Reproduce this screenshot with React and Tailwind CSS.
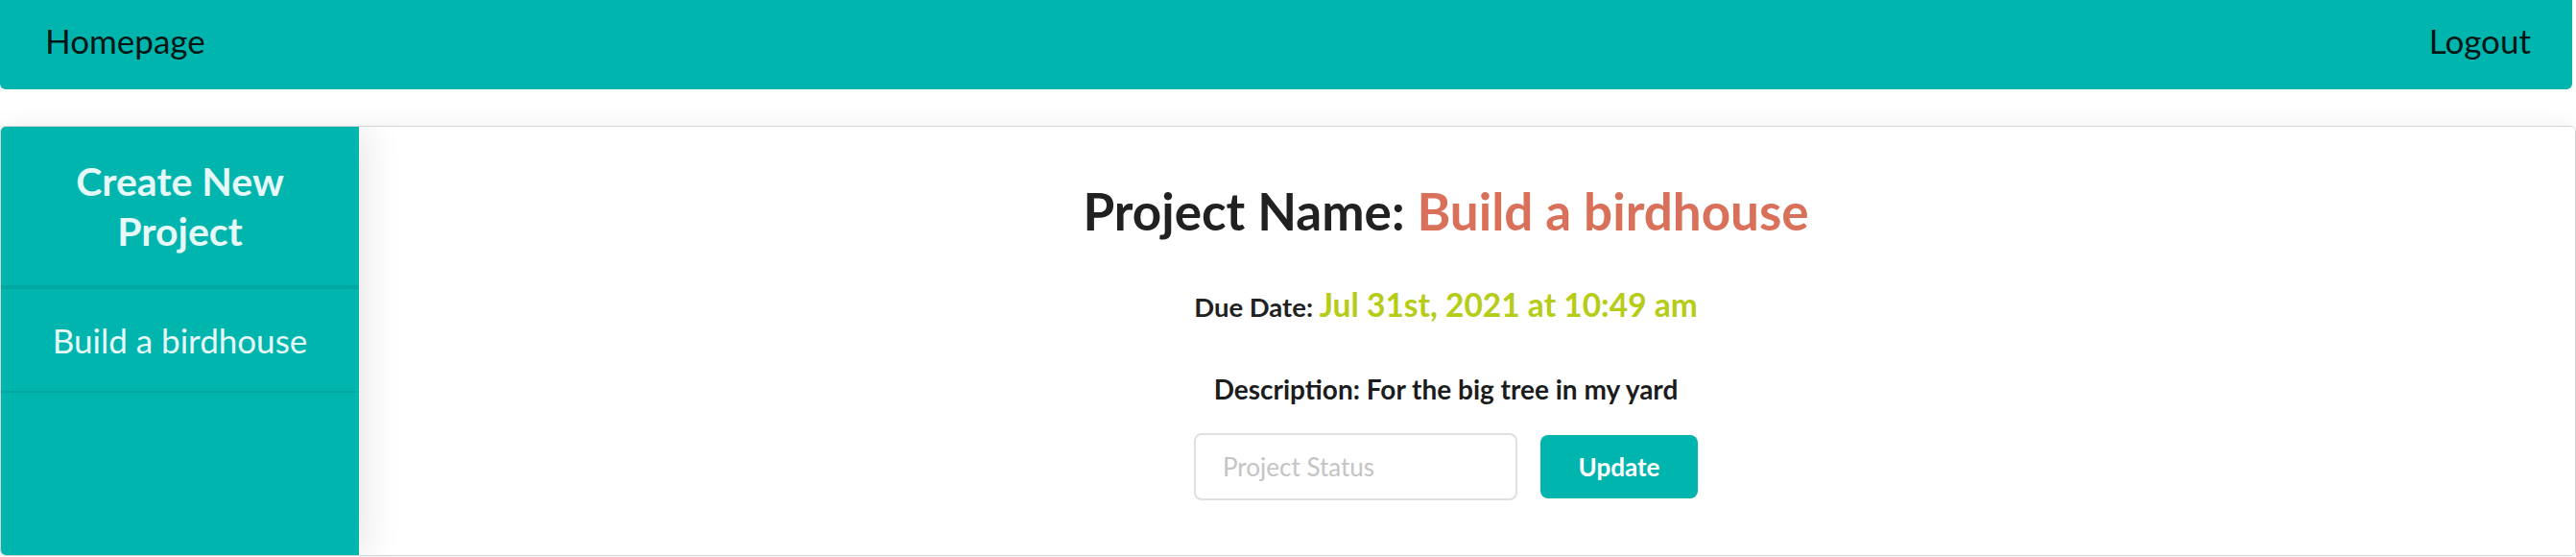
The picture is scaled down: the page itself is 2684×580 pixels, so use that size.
import React from "react";

export default function App() {
  return (
    <div className="w-[2684px] h-[580px] bg-white font-['Lato',sans-serif] overflow-hidden">
      {/* Top menu */}
      <nav className="h-[93px] mr-[4px] bg-[#00b5ad] rounded-b-[6px] flex items-center justify-between pl-[47px] pr-[43px] pb-[8px]">
        <a className="text-[35px] text-black/90">Homepage</a>
        <a className="text-[35px] text-black/90">Logout</a>
      </nav>

      {/* Project card */}
      <div className="mt-[38px] h-[448px] border border-[#d4d4d5] rounded-[6px] shadow-[0_0_24px_rgba(0,0,0,0.07)] flex overflow-hidden">
        <aside className="relative z-10 w-[373px] bg-[#00b5ad] text-white/90 shadow-[0_0_40px_rgba(34,36,38,0.15)] flex flex-col">
          <div className="pt-[31px] pb-[30px] text-center text-[41px] font-bold leading-[52px]">
            Create New
            <br />
            Project
          </div>
          <div className="h-[4px] bg-[#00a8a1]" />
          <div className="h-[106px] flex items-center justify-center text-[35px]">
            Build a birdhouse
          </div>
          <div className="h-[2px] bg-[#00a8a1]" />
        </aside>

        <main className="flex-1 bg-white flex flex-col items-center text-center pr-[44px]">
          <h1 className="mt-[56px] text-[53px] font-bold leading-[64px] text-[#212121]">
            Project Name: <span className="text-[#d9705a]">Build a birdhouse</span>
          </h1>
          <p className="mt-[45px] text-[27.5px] font-bold leading-[40px] text-[#212121]">
            Due Date: <span className="text-[33.5px] text-[#b5cc18]">Jul 31st, 2021 at 10:49 am</span>
          </p>
          <p className="mt-[48px] text-[28px] font-bold leading-[34px] text-[#1b1c1d]">
            Description: For the big tree in my yard
          </p>
          <div className="mt-[29px] flex items-center gap-[24px]">
            <input
              className="w-[337px] h-[70px] border-2 border-[#e0e0e0] rounded-[8px] px-[28px] text-[26px] text-[#333] placeholder:text-[#c4c4c4] outline-none"
              placeholder="Project Status"
            />
            <button className="w-[164px] h-[66px] bg-[#00b5ad] rounded-[8px] text-white text-[26px] font-bold">
              Update
            </button>
          </div>
        </main>
      </div>
    </div>
  );
}
